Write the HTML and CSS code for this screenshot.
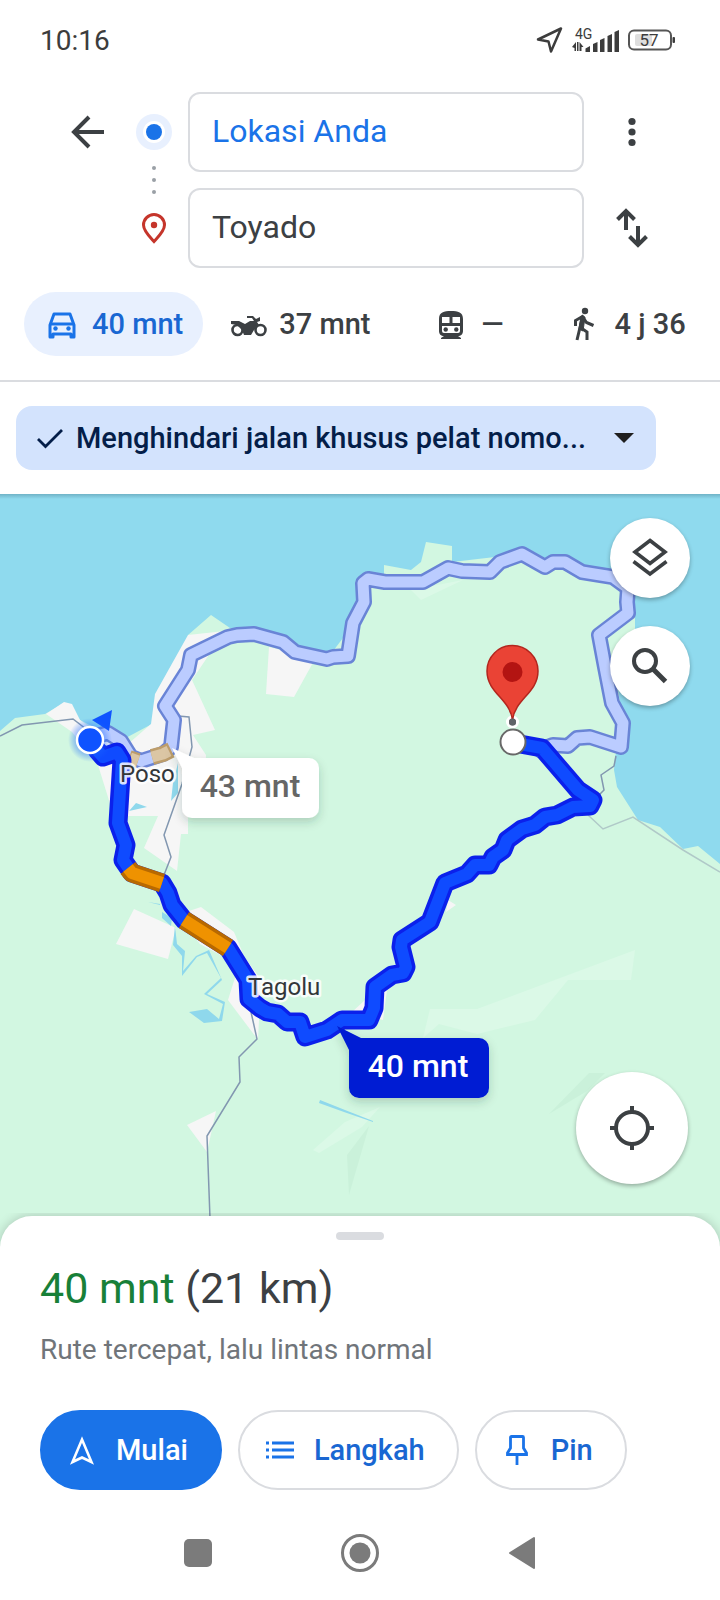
FILE: index.html
```html
<!DOCTYPE html>
<html lang="id">
<head>
<meta charset="utf-8">
<meta name="viewport" content="width=device-width, initial-scale=1">
<title>Rute ke Toyado</title>
<link rel="stylesheet" href="styles.css">
</head>
<body>
<div class="status-bar">
  <span class="clock">10:16</span>
  <div class="status-icons">
    <svg width="28" height="28" viewBox="0 0 28 28"><path d="M2 13.500 25 2.500 15 25.500 12.500 15.500Z" fill="none" stroke="#3c3c3c" stroke-width="2.500" stroke-linejoin="round"/></svg>
    <svg width="48" height="26" viewBox="0 0 48 26" fill="#3c3c3c">
      <text class="network" x="3" y="12">4G</text>
      <path d="M0 20 4 15v9H2.500V21ZM5 15h1.500v9H5ZM7.500 15l4 5H9.500v4h-2Z"/>
      <path d="M13.500 21.500 18 19v6h-4.500ZM21 17l4.500-2v10H21ZM28 13l4.500-2v14H28ZM35.500 9 40 7v18h-4.500ZM42.500 5 47 3v22h-4.500Z"/>
    </svg>
    <svg width="48" height="22" viewBox="0 0 48 22">
      <rect x="7" y="5" width="17" height="12" rx="2" fill="#dedede"/>
      <rect x="1" y="1.500" width="42" height="19" rx="5" fill="none" stroke="#555" stroke-width="2"/>
      <rect x="44.500" y="8" width="2.500" height="6" rx="1" fill="#3c3c3c"/>
      <text class="battery" x="21" y="17" text-anchor="middle">57</text>
    </svg>
  </div>
</div>

<header class="directions">
  <button class="icon-button" type="button" aria-label="Kembali">
    <svg width="48" height="48" viewBox="0 0 48 48"><path d="M40 24H11M25 9 10 24 25 39" fill="none" stroke="#3c4043" stroke-width="4"/></svg>
  </button>
  <svg class="marker" width="36" height="36" viewBox="0 0 36 36"><circle cx="18" cy="18" r="18" fill="#e8f0fe"/><circle cx="18" cy="18" r="11" fill="#fff"/><circle cx="18" cy="18" r="8" fill="#1a73e8"/></svg>
  <input class="place origin" type="text" value="Lokasi Anda" aria-label="Titik awal">
  <button class="icon-button" type="button" aria-label="Opsi lainnya">
    <svg width="48" height="48" viewBox="0 0 48 48" fill="#3c4043"><circle cx="24" cy="13.500" r="3.600"/><circle cx="24" cy="24" r="3.600"/><circle cx="24" cy="34.500" r="3.600"/></svg>
  </button>
  <svg class="marker destination" width="36" height="80" viewBox="0 0 36 80">
    <path d="M18 53.500C14 49 7.500 43 7.500 37a10.500 10.500 0 0 1 21 0C28.500 43 22 49 18 53.500Z" fill="none" stroke="#c5352b" stroke-width="3"/><circle cx="18" cy="37" r="3.200" fill="#c5352b"/>
  </svg>
  <input class="place" type="text" value="Toyado" aria-label="Tujuan">
  <button class="icon-button" type="button" aria-label="Tukar titik awal dan tujuan">
    <svg width="48" height="48" viewBox="0 0 48 48" fill="none" stroke="#3c4043" stroke-width="4"><path d="M18 26V7M9.500 15.500 18 7l8.500 8.500M30 22v19M21.500 32.500 30 41l8.500-8.500"/></svg>
  </button>
  <svg class="via-dots" width="4" height="28" viewBox="0 0 4 28" fill="#9aa0a6"><circle cx="2" cy="2" r="2"/><circle cx="2" cy="14" r="2"/><circle cx="2" cy="26" r="2"/></svg>
</header>

<nav class="modes" aria-label="Moda transportasi">
  <button class="mode selected" type="button">
    <svg width="36" height="36" viewBox="0 0 36 36"><path d="M10 8h16l4 11v12h-3v-3H9v3H6V19Z" fill="none" stroke="#1a73e8" stroke-width="3" stroke-linejoin="round"/><path d="M6 18h24" stroke="#1a73e8" stroke-width="3"/><circle cx="11.500" cy="22.500" r="2.200" fill="#1a73e8"/><circle cx="24.500" cy="22.500" r="2.200" fill="#1a73e8"/></svg>
    40 mnt
  </button>
  <button class="mode" type="button">
    <svg width="36" height="36" viewBox="0 0 36 36" fill="#3c4043"><circle cx="6.500" cy="24" r="5" fill="none" stroke="#3c4043" stroke-width="2.600"/><circle cx="29.500" cy="24" r="5" fill="none" stroke="#3c4043" stroke-width="2.600"/><path d="M0 15h8l6 3 5-3h4l-2-3h-5v-2h6l3 3 4-2v4l-3 1 2 3-5 5-3 5h-7l-2-5-5-5-6-1Z"/></svg>
    37 mnt
  </button>
  <button class="mode transit" type="button">
    <svg width="36" height="36" viewBox="0 0 36 36" fill="#3c4043"><path d="M6 13c0-7 5-8 12-8s12 1 12 8v12c0 3-2 5-5 5l3 2v1H8v-1l3-2c-3 0-5-2-5-5Z"/><path d="M9 11h7.500v6H9ZM19.500 11H27v6h-7.500Z" fill="#fff"/><path d="M9 20h18v5q0 2-2 2H11q-2 0-2-2Z" fill="#fff"/><circle cx="12.700" cy="23.500" r="2.200"/><circle cx="23.300" cy="23.500" r="2.200"/></svg>
    —
  </button>
  <button class="mode" type="button">
    <svg width="36" height="36" viewBox="0 0 36 36" fill="none" stroke="#3c4043" stroke-width="3"><circle cx="19" cy="5" r="3.200" fill="#3c4043" stroke="none"/><path d="M9.500 20v-5.500l7-4 4 6 7 3M16.500 11 11 34M14.500 21.500 21 26v8"/><path d="m15 10 4 1-2 14-4-2Z" fill="#3c4043" stroke-width="1"/></svg>
    4 j 36
  </button>
</nav>

<div class="options">
  <button class="filter-chip" type="button">
    <svg width="28" height="28" viewBox="0 0 28 28"><path d="m2 15 7.500 7.500L26 6" fill="none" stroke="#041e49" stroke-width="2.800"/></svg>
    <span class="filter-label">Menghindari jalan khusus pelat nomo...</span>
    <svg width="20" height="10" viewBox="0 0 20 10"><path d="M0 0h20L10 10Z" fill="#1f1f1f"/></svg>
  </button>
</div>

<main class="map">
  <svg class="map-canvas" viewBox="0 494 720 752" preserveAspectRatio="xMidYMid slice" role="img" aria-label="Peta rute dari Poso ke Toyado">
    <defs>
      <filter id="soft" x="-20%" y="-20%" width="140%" height="160%"><feDropShadow dx="0" dy="4" stdDeviation="5" flood-color="#23402f" flood-opacity=".22"/></filter>
      <radialGradient id="glow"><stop offset=".5" stop-color="#1a66ff" stop-opacity=".55"/><stop offset="1" stop-color="#1a66ff" stop-opacity="0"/></radialGradient>
      <path id="alternative" d="M92 737 108 733 121 741 131 757 141 761 163 754 171 747 174 720 165 706 188 670 191 655 228 637 237 635 254 634 283 642 295 652 327 659 333 657 348 656 353 623 364 602 363 583 368 579 385 582H423L448 568 462 571 490 572 500 562 522 554 545 567 553 562H565L582 572 613 577 628 588 627 602 628 613 599 635 605 667 612 703 623 723 621 747 590 737 577 738 568 746 553 745 540 750"/>
      <path id="fastest" d="M520 744 542 748 578 790 593 800 590 806 573 807 557 815 545 817 535 825 522 829 507 840 503 850 493 857 489 865H475L467 874 445 883 430 922 402 940 401 947 406 967 403 973 392 975 375 987 374 1008 369 1020H342L327 1030 305 1037 300 1022 287 1022 278 1014 267 1012 260 1008 249 999 248 980 228 948 184 920 172 905 168 893 162 883 132 873 123 860 126 845 118 823 122 760 117 752 103 757 97 750"/>
    </defs>
    <rect y="494" width="720" height="752" fill="#8fdaee"/>
    <path fill="#d2f7e1" d="M0 731 15 718 45 714 64 703 80 720 120 741 152 724 156 694 188 650V635L211 615 230 628 254 634 290 650 327 659 343 638 353 623 362 585 384 580V565L411 570 421 562 426 542 452 546V562L522 554 582 572 635 590V630L618 690 625 735 615 756 614 770 617 787 638 820 660 827 683 849 698 846 720 864V1246H0Z"/>
    <g fill="#f6f6f6">
      <path d="M46 714 64 702 72 704 80 720 110 742 128 744 151 724 155 694 188 635 225 631 192 680 215 730 193 735 206 755 205 790 188 800V834H181L177 871 144 848 158 816H128L112 810 98 765 72 732Z"/>
      <path d="M269 647 315 659 294 697 266 694Z"/>
      <path d="M134 909 176 928 168 959 116 944Z"/>
      <path d="M177 915 201 907 234 932 244 956 261 980 258 1040 228 1000 239 965 200 944Z"/>
      <path d="M187 1125 216 1111 207 1152Z"/>
      <path d="M448 900 456 905 446 912ZM352 1012 365 1000 387 990 383 1020Z"/>
    </g>
    <path fill="#dbf9e7" d="m411 590 10 10 42-20ZM423 1038l7-29h47l158-59-4 30h-63l-33 40-58 14-38-10ZM313 1150l32-28 35-15-18 20-43 26Z"/>
    <path fill="#caf1da" d="m347 1155 22-29-20 69ZM549 1114l40-41h16l-18 18Z"/>
    <path fill="#8fd8ec" d="m129 811 7-8 11 4ZM178 763v30l-7 8 2-18ZM162 912l10 6-1 8-9-8ZM175 926l2 18 8 7-2 20 13-15 13-6 13 30-15 14 18 8-3 19-18 2-15-11 18-3 12 10 4-15-19-10 17-16-14-25-10 4-15 19v-20l-9-11ZM148 902l12 2v1ZM320 1100l25 10 28 11v1l-29-10-25-9Z"/>
    <g fill="none" stroke="#8297b0" stroke-width="1.500">
      <path d="m0 736 22-11 51-6 26 20M178 716l11 1 3 30-10 37-18 51 7 22-7 18M251 1012l6 27-18 18 1 25-33 54 4 110"/>
      <path d="m616 756-2 10-13 9 3 15-8 8"/>
      <path d="m588 815 15 14 30-12 50 33 37 22" stroke="#b0c9c8"/>
    </g>
    <g class="road">
      <use href="#alternative" stroke="#6984d6" stroke-width="16"/>
      <use href="#alternative" stroke="#bbccff" stroke-width="11"/>
      <g stroke-linecap="butt">
        <path stroke="#bd9d6b" stroke-width="16" d="m152 757 11-3 8-4M129 758l9 3"/>
        <path stroke="#dbc6a4" stroke-width="11" d="m152 757 11-3 6-3M130 758l8 3"/>
      </g>
      <use href="#fastest" stroke="#0b20eb" stroke-width="19"/>
      <use href="#fastest" stroke="#0f4bff" stroke-width="12"/>
      <g stroke-linecap="butt">
        <path stroke="#b86900" stroke-width="19" d="m228 948-44-28M162 883l-30-10-4-5"/>
        <path stroke="#ef9200" stroke-width="12" d="m228 948-44-28M162 883l-30-10-4-5"/>
      </g>
    </g>
    <path d="m92 720 20-10-3 21Z" fill="#0f53ff"/>
    <circle cx="90" cy="740" r="22" fill="url(#glow)"/>
    <circle cx="90" cy="740" r="13" fill="#0f53ff" stroke="#fff" stroke-width="2.500"/>
    <g filter="url(#soft)"><path fill="#fff" d="M172 748 194 758H309a10 10 0 0 1 10 10V808a10 10 0 0 1-10 10H192a10 10 0 0 1-10-10V768Z"/></g>
    <text class="duration alternative-time" x="250" y="797">43 mnt</text>
    <g filter="url(#soft)"><path fill="#041dd3" d="M337 1026 361 1038H479a10 10 0 0 1 10 10V1088a10 10 0 0 1-10 10H359a10 10 0 0 1-10-10V1050Z"/></g>
    <text class="duration" x="418" y="1077">40 mnt</text>
    <text class="town" x="120" y="782">Poso</text>
    <text class="town" x="248" y="995">Tagolu</text>
    <circle cx="512.500" cy="722" r="5" fill="#5f6368" stroke="#fff" stroke-width="3"/>
    <path d="M512.500 720C510 699 487 693 487 671a25.500 25.500 0 0 1 51 0C538 693 515 699 512.500 720Z" fill="#ea4335" stroke="#b3261e" stroke-width="1.500"/>
    <circle cx="512.500" cy="672" r="10" fill="#b31412"/>
    <circle cx="512.500" cy="722" r="3.500" fill="#5f6368"/>
    <circle cx="513" cy="742" r="12.500" fill="#fff" stroke="#686868" stroke-width="2"/>
  </svg>
  <div class="map-controls">
    <button class="fab" type="button" aria-label="Lapisan peta">
      <svg width="48" height="48" viewBox="0 0 48 48" fill="none" stroke="#3c4043" stroke-width="3.600"><path d="M24 6.500 39 18 24 29.500 9 18ZM7.500 27.500 24 40l16.500-12.500"/></svg>
    </button>
    <button class="fab" type="button" aria-label="Telusuri di sepanjang rute">
      <svg width="48" height="48" viewBox="0 0 48 48" fill="none" stroke="#3c4043" stroke-width="4"><circle cx="19" cy="19" r="11"/><path d="m27 27 12.500 12.500" stroke-width="5"/></svg>
    </button>
    <button class="fab locate" type="button" aria-label="Lokasi saya">
      <svg width="48" height="48" viewBox="0 0 48 48" fill="none" stroke="#3c4043" stroke-width="4"><circle cx="24" cy="24" r="16"/><path d="M24 2v6M24 40v6M2 24h6M40 24h6"/></svg>
    </button>
  </div>
</main>

<section class="sheet">
  <div class="handle"></div>
  <h1 class="summary"><span class="time">40 mnt</span> (21 km)</h1>
  <p class="detail">Rute tercepat, lalu lintas normal</p>
  <div class="actions">
    <button class="action primary" type="button">
      <svg width="32" height="32" viewBox="0 0 32 32"><path d="M16 5.500 25.500 28 16 23.500 6.500 28Z" fill="none" stroke="#fff" stroke-width="2.600"/></svg>
      Mulai
    </button>
    <button class="action" type="button">
      <svg width="32" height="32" viewBox="0 0 32 32" stroke="#1a73e8" stroke-width="2.800"><path d="M2 9h3M8 9h22M2 16h3M8 16h22M2 23h3M8 23h22"/></svg>
      Langkah
    </button>
    <button class="action" type="button">
      <svg width="32" height="32" viewBox="0 0 32 32" fill="none" stroke="#1a73e8" stroke-width="2.800"><path d="M9.500 3.500q0-1 1-1h11q1 0 1 1V14l3 5v1.500H6.500V19l3-5ZM16 20v11"/></svg>
      Pin
    </button>
  </div>
</section>

<div class="system-nav">
  <button class="system-button" type="button" aria-label="Aplikasi terbaru"><svg width="40" height="40" viewBox="0 0 40 40"><rect x="6" y="6" width="28" height="28" rx="5" fill="#7b7b7b"/></svg></button>
  <button class="system-button" type="button" aria-label="Layar utama"><svg width="40" height="40" viewBox="0 0 40 40"><circle cx="20" cy="20" r="17.500" fill="none" stroke="#7b7b7b" stroke-width="3"/><circle cx="20" cy="20" r="10.500" fill="#7b7b7b"/></svg></button>
  <button class="system-button" type="button" aria-label="Kembali ke layar sebelumnya"><svg width="40" height="40" viewBox="0 0 40 40"><path d="m8 20 24-15v30Z" fill="#7b7b7b" stroke="#7b7b7b" stroke-width="2" stroke-linejoin="round"/></svg></button>
</div>
</body>
</html>
```

FILE: styles.css
```css
* { box-sizing: border-box; }

body {
  margin: 0;
  min-height: 100vh;
  display: flex;
  flex-direction: column;
  background: #fff;
  color: #3c4043;
  font-family: "Roboto", "Liberation Sans", sans-serif;
  font-size: 29px;
}

svg { display: block; flex: none; }

button {
  margin: 0;
  padding: 0;
  border: 0;
  background: none;
  color: inherit;
  font: inherit;
  font-weight: 500;
  display: flex;
  align-items: center;
  justify-content: center;
  white-space: nowrap;
}

.status-bar {
  display: flex;
  justify-content: space-between;
  align-items: center;
  height: 76px;
  padding: 4px 44px 0 40px;
}
.clock { font-size: 28px; color: #3c3c3c; }
.status-icons { display: flex; align-items: center; gap: 8px; }
.network { font-size: 14px; }
.battery { font-size: 17px; fill: #3c3c3c; }

.directions {
  position: relative;
  display: grid;
  grid-template-columns: 48px 76px minmax(0, 1fr) 96px;
  grid-template-rows: 80px 80px;
  row-gap: 16px;
  align-items: center;
  padding: 16px 40px 24px 64px;
}
.icon-button { height: 80px; }
.marker { justify-self: center; margin-left: 8px; }
.destination { grid-column: 2; }
.via-dots { position: absolute; left: 152px; top: 90px; }
.place {
  width: 100%;
  height: 80px;
  padding: 0 22px 2px;
  border: 2px solid #dadce0;
  border-radius: 12px;
  background: #fff;
  color: #3c4043;
  font: inherit;
  font-size: 32px;
}
.origin { color: #1a73e8; }

.modes {
  display: flex;
  gap: 8px;
  padding: 0 24px 24px;
  border-bottom: 2px solid #dadce0;
  overflow: hidden;
}
.mode {
  height: 64px;
  padding: 0 20px;
  gap: 12px;
  border-radius: 32px;
}
.selected { background: #e8f0fe; color: #1967d2; }
.transit { min-width: 140px; }

.options { padding: 24px 16px; }
.filter-chip {
  width: 93%;
  height: 64px;
  padding: 0 22px 0 20px;
  gap: 12px;
  border-radius: 16px;
  background: #d3e3fd;
  color: #041e49;
}
.filter-label {
  flex: 1;
  overflow: hidden;
  text-align: left;
  text-overflow: ellipsis;
}

.map {
  position: relative;
  flex: 1 0 752px;
  min-height: 0;
  overflow: hidden;
  background: #d2f7e1;
}
.map-canvas {
  position: absolute;
  inset: 0;
  width: 100%;
  height: 100%;
}
.map::after {
  content: "";
  position: absolute;
  inset: 0 0 auto;
  height: 5px;
  background: linear-gradient(rgb(0 40 60 / 22%), transparent);
}
.road { fill: none; stroke-linejoin: round; stroke-linecap: round; }
.town {
  font-size: 24px;
  fill: #33373a;
  stroke: #fff;
  stroke-opacity: .85;
  stroke-width: 5px;
  stroke-linejoin: round;
  paint-order: stroke;
}
.duration { font-size: 32px; font-weight: 500; fill: #fff; text-anchor: middle; }
.alternative-time { fill: #666; }

.map-controls {
  position: absolute;
  inset: 24px 30px 62px auto;
  display: flex;
  flex-direction: column;
  align-items: flex-end;
  gap: 28px;
}
.fab {
  width: 80px;
  height: 80px;
  border-radius: 50%;
  background: #fff;
  box-shadow: 0 2px 4px rgb(0 0 0 / 30%);
}
.locate { width: 112px; height: 112px; margin: auto 2px 0 0; }

.sheet {
  position: relative;
  margin-top: -30px;
  padding: 16px 40px 0;
  border-radius: 32px 32px 0 0;
  background: #fff;
  box-shadow: 0 0 12px rgb(0 0 0 / 20%);
  clip-path: inset(-3px 0 0);
}
.handle {
  width: 48px;
  height: 8px;
  margin: 0 auto;
  border-radius: 4px;
  background: #dadce0;
}
.summary {
  margin: 20px 0 0;
  font-size: 43px;
  line-height: 56px;
  font-weight: 400;
}
.time { color: #188038; }
.detail {
  margin: 14px 0 0;
  color: #70757a;
  font-size: 28px;
  line-height: 40px;
}
.actions { display: flex; gap: 16px; margin-top: 40px; }
.action {
  height: 80px;
  padding: 0 32px 0 24px;
  gap: 18px;
  border: 2px solid #dadce0;
  border-radius: 40px;
  color: #1967d2;
}
.primary { border-color: #1a73e8; background: #1a73e8; color: #fff; }

.system-nav {
  display: flex;
  justify-content: center;
  align-items: center;
  gap: 122px;
  height: 110px;
  padding-top: 16px;
}
.system-button { width: 40px; height: 40px; }
```
